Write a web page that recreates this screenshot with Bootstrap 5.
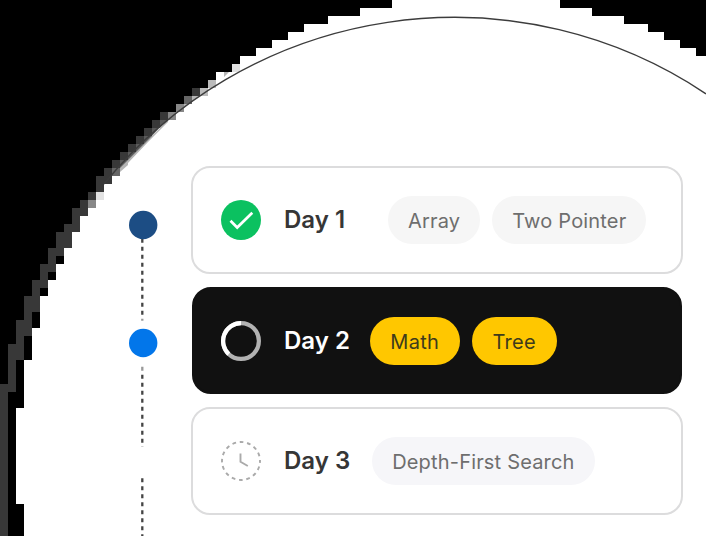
<!DOCTYPE html>
<html lang="en">
<head>
<meta charset="utf-8">
<meta name="viewport" content="width=device-width, initial-scale=1">
<title>Study plan</title>
<link href="https://cdn.jsdelivr.net/npm/bootstrap@5.3.0/dist/css/bootstrap.min.css" rel="stylesheet">
<style>
body{font-family:Inter,"Liberation Sans",sans-serif;background:#fff}
.stage{width:706px;height:536px}
.plan{padding:166px 23px 0 128px;gap:33px}
.rail{width:30px;height:370px;flex:none}
.days{width:492px;gap:13px}
.day{height:108px;border:2px solid #dcdcdd;border-radius:19px;padding-left:28px;background:#fff}
.day-active{height:107px;background:#111;border-color:#111;margin:0 1px;padding-left:27px}
.day-icon{width:40px;height:40px;flex:none}
.day-name{font-size:24px;font-weight:600;line-height:30px;color:#363636;margin-left:23px}
.day-active .day-name{color:#fff}
.topics{gap:12px}
.topic{height:48px;padding:2px 20px 0;font-size:20px;letter-spacing:.18px;line-height:30px;border-radius:24px;background:#f6f6f6;color:#6e6e6e}
.day-active .topic{background:#ffc700;color:#3e3b1c;letter-spacing:.3px;padding:2px 20.700px 0 20.500px}
.day-later .topic{background:#f6f6f9}
.gap-1st{margin-left:43px}.gap-2nd{margin-left:20px}.gap-3rd{margin-left:22px}
</style>
</head>
<body>
<main class="stage position-relative overflow-hidden">
<svg class="position-absolute top-0 start-0" width="706" height="536" viewBox="0 0 706 536" aria-hidden="true">
<g shape-rendering="crispEdges">
<path d="M0 0H392V8H360V16H328V24H304V32H288V40H272V48H256V56H240V64H232V72H216V80H208V88H192V96H184V104H176V112H160V120H152V128H144V136H136V144H128V152H120V160H112V168H104V176H96V192H88V200H80V208H72V224H64V256H64V264H56V280H48V296H40V328H32V360H24V408H16V504H24V536H0Z"/>
<path d="M560 0H706V56H696V48H680V40H664V32H648V24H624V16H592V8H560Z"/>
<path fill="#383838" d="M192 88h8v8h-8zM160 112h8v8h-8zM152 120h8v8h-8zM144 128h8v8h-8zM136 136h8v8h-8zM128 144h8v8h-8zM120 152h8v8h-8zM112 160h8v8h-8zM104 168h8v8h-8zM96 176h16v8h-16zM96 184h8v8h-8zM88 192h8v8h-8zM80 200h8v8h-8zM72 208h16v8h-16zM72 216h8v8h-8zM64 224h16v8h-16zM56 232h16v16h-16zM48 248h16v8h-16zM48 256h8v8h-8zM40 264h16v8h-16zM40 272h8v8h-8zM32 280h16v8h-16zM32 288h8v8h-8zM24 296h16v16h-16zM24 312h8v8h-8zM16 320h16v16h-16zM16 336h8v8h-8zM8 344h16v16h-16zM8 360h8v24h-8zM0 384h16v8h-16zM0 392h8v144h-8z"/>
<path fill="#666" d="M184 96h8v8h-8zM112 168h8v8h-8z"/>
<path fill="#888" d="M176 104h8v8h-8zM168 112h8v8h-8zM88 200h8v8h-8z"/>
<path fill="#bbb" d="M200 88h8v8h-8zM208 80h8v8h-8z"/>
<path fill="#e2e2e2" d="M96 192h8v8h-8zM232 64h8v8h-8z"/>
</g>
<path fill="#5a5a5a" d="M160 120h8l-8 8zM152 128h7l-7 8zM144 136h8v1l-7 7h-1zM136 144h8v1l-7 7h-1zM128 152h8v2l-6 6h-2zM120 160h8v3l-5 5h-3z"/>
<path fill="#b5b5b5" d="M224 72h5l-5 5zM168 120l-40 40v3l20-21 20-20zM192 96h7l-7 6zM184 104h4l-4 4zM128 160v5l-8 7v-4z"/>
<path d="M104 184A452 452 0 0 1 706 93.800" fill="none" stroke="#3c3c3c" stroke-width="1.400"/>
</svg>
<div class="plan d-flex position-relative">
<svg class="rail" viewBox="128 166 30 370" aria-hidden="true">
<g stroke="#444" stroke-width="2.300" stroke-dasharray="4 4">
<path d="M142.300 238.700V318"/><path d="M142.300 374.700V447"/><path d="M142.300 478.300V536"/>
</g>
<path stroke="#999" stroke-width="2.300" d="M142.300 318.700v2M142.300 366.700v4"/>
<circle cx="143.200" cy="225" r="14.200" fill="#1c4d84"/><circle cx="143.200" cy="343" r="14.200" fill="#0276ea"/>
</svg>
<div class="days d-flex flex-column">
<section class="day d-flex align-items-center">
<svg class="day-icon" viewBox="0 0 40 40" aria-label="Done"><circle cx="20" cy="20" r="20" fill="#0bc160"/><path d="M9.500 20.800 16.200 27.500 31.300 12.700" fill="none" stroke="#fff" stroke-width="2.700"/></svg>
<span class="day-name">Day 1</span>
<div class="topics d-flex gap-1st"><span class="topic d-flex align-items-center">Array</span><span class="topic d-flex align-items-center">Two Pointer</span></div>
</section>
<section class="day day-active d-flex align-items-center">
<svg class="day-icon" viewBox="0 0 40 40" aria-label="In progress"><circle cx="20" cy="20" r="17.900" fill="none" stroke="#b2b2b2" stroke-width="4.200"/><path d="M20 2.100A17.900 17.900 0 0 0 7.800 33.100" fill="none" stroke="#fff" stroke-width="4.200"/></svg>
<span class="day-name">Day 2</span>
<div class="topics d-flex gap-2nd"><span class="topic d-flex align-items-center">Math</span><span class="topic d-flex align-items-center">Tree</span></div>
</section>
<section class="day day-later d-flex align-items-center">
<svg class="day-icon" viewBox="0 0 40 40" aria-label="Scheduled"><circle cx="20" cy="20" r="19" fill="none" stroke="#aaa" stroke-width="1.900" stroke-dasharray="3.730 3.730" stroke-dashoffset="1.860"/><path d="M19.500 12.500V20.800L26.800 25" fill="none" stroke="#aaa" stroke-width="1.900"/></svg>
<span class="day-name">Day 3</span>
<div class="topics d-flex gap-3rd"><span class="topic d-flex align-items-center">Depth-First Search</span></div>
</section>
</div>
</div>
</main>
<script src="https://cdn.jsdelivr.net/npm/bootstrap@5.3.0/dist/js/bootstrap.bundle.min.js"></script>
</body>
</html>
